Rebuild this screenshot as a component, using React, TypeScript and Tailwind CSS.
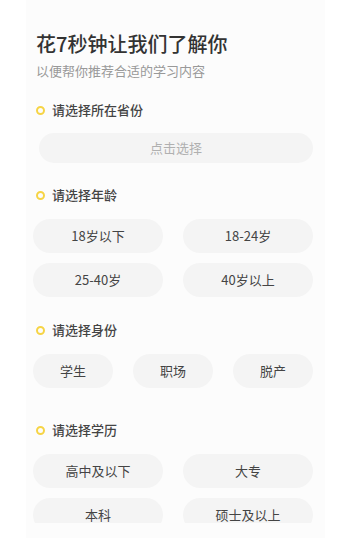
import React, { useState } from "react";

const ages = ["18岁以下", "18-24岁", "25-40岁", "40岁以上"];
const roles = ["学生", "职场", "脱产"];
const edus = ["高中及以下", "大专", "本科", "硕士及以上"];

const SectionTitle: React.FC<{ text: string; className?: string }> = ({ text, className }) => (
  <div className={"flex h-5 items-center gap-[7px] pl-[10px] " + (className ?? "")}>
    <span className="box-border h-[9px] w-[9px] rounded-full border-2 border-[#f6d445]" />
    <span className="text-[13px] font-medium leading-5 text-[#444]">{text}</span>
  </div>
);

const Chip: React.FC<{ label: string; active: boolean; onClick: () => void }> = ({ label, active, onClick }) => (
  <button
    type="button"
    onClick={onClick}
    className={
      "flex h-[34px] items-center justify-center rounded-full text-[13px] " +
      (active ? "bg-[#fdf3c4] text-[#333]" : "bg-[#f4f4f4] text-[#444]")
    }
  >
    {label}
  </button>
);

export default function App() {
  const [age, setAge] = useState<string | null>(null);
  const [role, setRole] = useState<string | null>(null);
  const [edu, setEdu] = useState<string | null>(null);

  return (
    <div
      className="min-h-[538px] w-full bg-white"
      style={{ fontFamily: '"Noto Sans CJK SC", "Noto Sans", sans-serif' }}
    >
      <div className="ml-[26px] h-[538px] w-[299px] bg-[#fcfcfc]">
        <div className="h-[523px] overflow-hidden pt-[30px]">
          <h1 className="pl-[10px] text-[20px] font-medium leading-7 text-[#333]">花7秒钟让我们了解你</h1>
          <p className="mt-[3px] pl-[10px] text-[13px] leading-5 text-[#999]">以便帮你推荐合适的学习内容</p>

          <SectionTitle text="请选择所在省份" className="mt-[19px]" />
          <button
            type="button"
            className="ml-[13px] mt-[13px] flex h-[30px] w-[274px] items-center justify-center rounded-full bg-[#f4f4f4] text-[13px] text-[#b0b0b0]"
          >
            点击选择
          </button>

          <SectionTitle text="请选择年龄" className="mt-[22px]" />
          <div className="ml-[7px] mt-[14px] grid w-[280px] grid-cols-2 gap-x-5 gap-y-[10px]">
            {ages.map((a) => (
              <Chip key={a} label={a} active={age === a} onClick={() => setAge(a)} />
            ))}
          </div>

          <SectionTitle text="请选择身份" className="mt-[23px]" />
          <div className="ml-[7px] mt-[14px] grid w-[280px] grid-cols-3 gap-x-5">
            {roles.map((r) => (
              <Chip key={r} label={r} active={role === r} onClick={() => setRole(r)} />
            ))}
          </div>

          <SectionTitle text="请选择学历" className="mt-[32px]" />
          <div className="ml-[7px] mt-[14px] grid w-[280px] grid-cols-2 gap-x-5 gap-y-[10px]">
            {edus.map((e) => (
              <Chip key={e} label={e} active={edu === e} onClick={() => setEdu(e)} />
            ))}
          </div>
        </div>
      </div>
    </div>
  );
}
